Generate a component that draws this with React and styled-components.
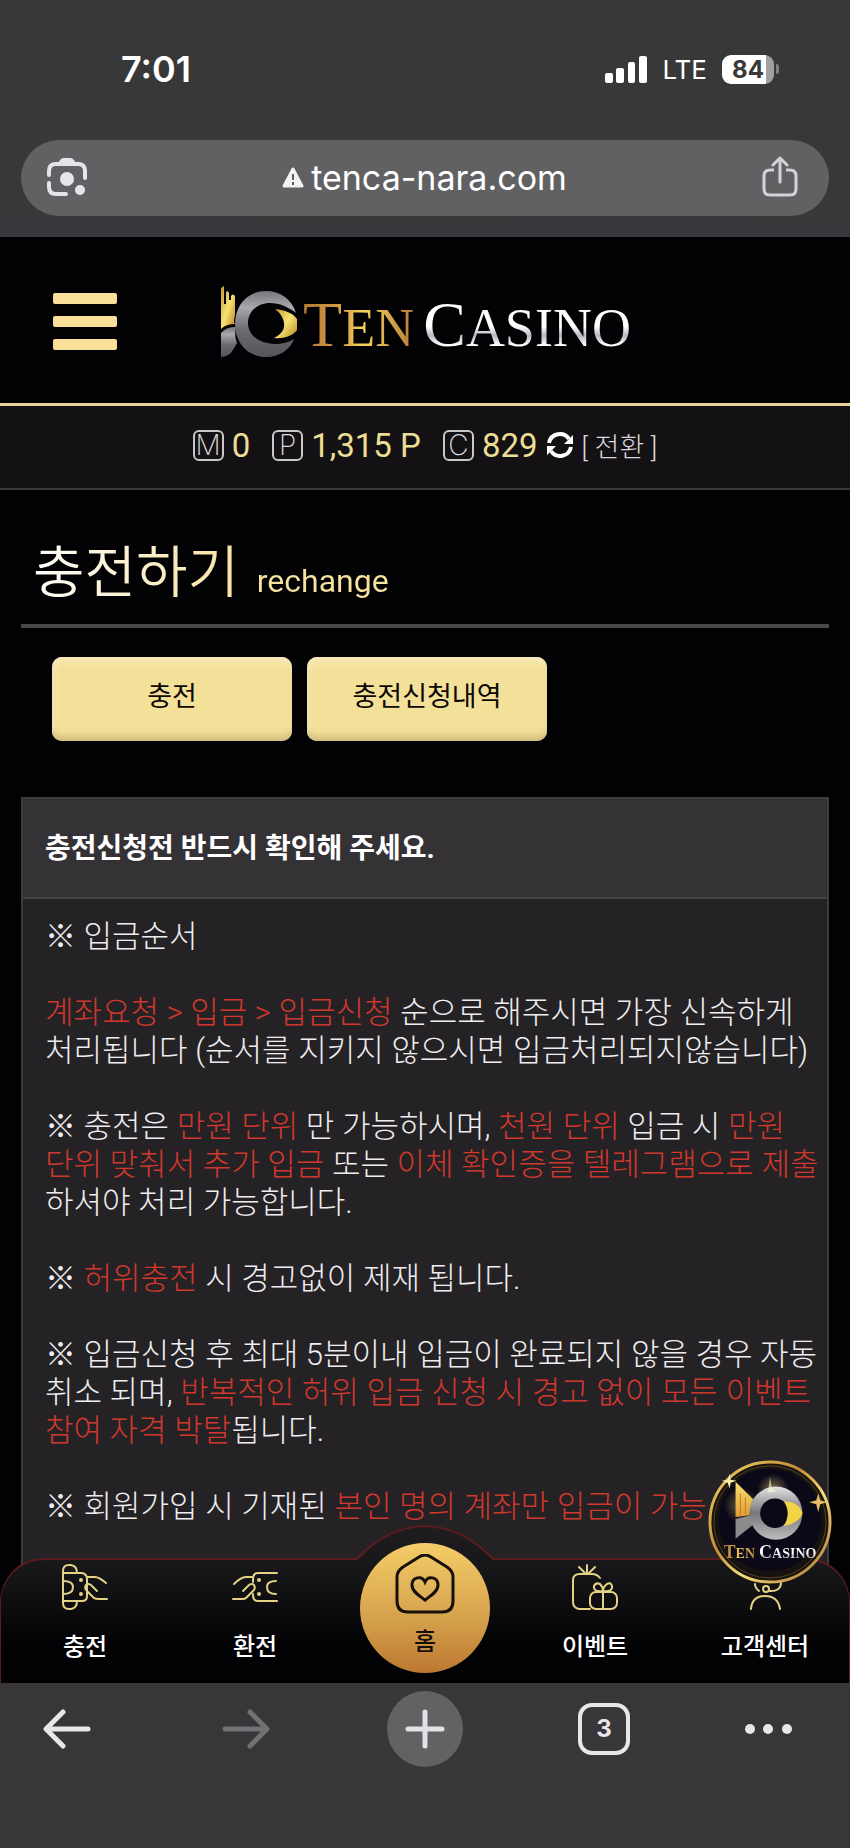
import React from "react";
import styled, { createGlobalStyle } from "styled-components";

const App = () => {
  return (
    <Phone>
      <GlobalStyle />
      <BrowserTop>
        <StatusBar>
          <Time>7:01</Time>
          <StatusRight>
            <SignalIcon />
            <Network>LTE</Network>
            <Battery>
              <Level>84</Level>
              <Nub />
            </Battery>
          </StatusRight>
        </StatusBar>
        <AddressBar>
          <IconButton aria-label="Lens">
            <LensIcon />
          </IconButton>
          <Address href="#address">
            <WarningIcon />
            tenca-nara.com
          </Address>
          <IconButton aria-label="Share">
            <ShareIcon />
          </IconButton>
        </AddressBar>
      </BrowserTop>

      <Site>
        <SiteHeader>
          <MenuButton aria-label="Menu">
            <MenuBar />
            <MenuBar />
            <MenuBar />
          </MenuButton>
          <Logo href="#home">
            <LogoMark id="head" width="78" height="72" />
            <LogoText>
              <GoldWord>
                <Initial>T</Initial>EN
              </GoldWord>
              <SilverWord>
                <Initial>C</Initial>ASINO
              </SilverWord>
            </LogoText>
          </Logo>
        </SiteHeader>

        <Wallet>
          <Balance>
            <Coin>M</Coin>0
          </Balance>
          <Balance>
            <Coin>P</Coin>1,315 P
          </Balance>
          <Balance>
            <Coin>C</Coin>829
            <Convert>
              <RefreshIcon />[ 전환 ]
            </Convert>
          </Balance>
        </Wallet>

        <Content>
          <Title>
            충전하기 <small>rechange</small>
          </Title>
          <Tabs>
            <TabButton>충전</TabButton>
            <TabButton>충전신청내역</TabButton>
          </Tabs>
          <Notice>
            <NoticeTitle>충전신청전 반드시 확인해 주세요.</NoticeTitle>
            <NoticeBody>
              <p>※ 입금순서</p>
              <p>
                <Red>계좌요청 &gt; 입금 &gt; 입금신청</Red> 순으로 해주시면 가장 신속하게
                <br />
                처리됩니다 (순서를 지키지 않으시면 입금처리되지않습니다)
              </p>
              <p>
                ※ 충전은 <Red>만원 단위</Red> 만 가능하시며, <Red>천원 단위</Red> 입금 시{" "}
                <Red>
                  만원
                  <br />
                  단위 맞춰서 추가 입금
                </Red>{" "}
                또는 <Red>이체 확인증을 텔레그램으로 제출</Red>
                <br />
                하셔야 처리 가능합니다.
              </p>
              <p>
                ※ <Red>허위충전</Red> 시 경고없이 제재 됩니다.
              </p>
              <p>
                ※ 입금신청 후 최대 5분이내 입금이 완료되지 않을 경우 자동
                <br />
                취소 되며,{" "}
                <Red>
                  반복적인 허위 입금 신청 시 경고 없이 모든 이벤트
                  <br />
                  참여 자격 박탈
                </Red>
                됩니다.
              </p>
              <p>
                ※ 회원가입 시 기재된 <Red>본인 명의 계좌만 입금이 가능</Red>
              </p>
            </NoticeBody>
          </Notice>
        </Content>

        <BottomNav>
          <NavShape />
          <NavItem href="#deposit">
            <DepositIcon />
            충전
          </NavItem>
          <NavItem href="#withdraw">
            <WithdrawIcon />
            환전
          </NavItem>
          <HomeItem href="#home">
            <HomeIcon />홈
          </HomeItem>
          <NavItem href="#event">
            <EventIcon />
            이벤트
          </NavItem>
          <NavItem href="#help">
            <HelpIcon />
            고객센터
          </NavItem>
        </BottomNav>

        <Badge href="#ten" aria-label="Ten Casino">
          <BadgeArt />
          <BadgeText>
            <GoldWord>
              <BadgeInitial>T</BadgeInitial>EN
            </GoldWord>
            <SilverWord>
              <BadgeInitial>C</BadgeInitial>ASINO
            </SilverWord>
          </BadgeText>
        </Badge>
      </Site>

      <Toolbar>
        <ToolButton aria-label="Back">
          <ArrowIcon color="#e9e6ea" />
        </ToolButton>
        <ToolButton aria-label="Forward" disabled>
          <ArrowIcon color="#737074" flip />
        </ToolButton>
        <ToolButton aria-label="New tab" $round>
          <PlusIcon />
        </ToolButton>
        <ToolButton aria-label="Tabs">
          <TabCount>3</TabCount>
        </ToolButton>
        <ToolButton aria-label="More">
          <DotsIcon />
        </ToolButton>
      </Toolbar>
    </Phone>
  );
};

export default App;

const SignalIcon = () => (
  <svg width="42" height="27" viewBox="0 0 42 27" fill="#fff">
    <rect x="0" y="17" width="8" height="10" rx="2" />
    <rect x="11" y="12" width="8" height="15" rx="2" />
    <rect x="23" y="6" width="7" height="21" rx="2" />
    <rect x="34" y="0" width="8" height="27" rx="2" />
  </svg>
);

const LensIcon = () => (
  <svg width="40" height="40" viewBox="0 0 40 40" fill="none" stroke="#e6e4e8" strokeWidth="4">
    <path d="M2 18V14Q2 7 9 7H31Q38 7 38 14V21M2 26V30Q2 37 9 37H19" strokeLinecap="round" />
    <path d="M10 7L14 2Q15 1 17 1H23Q25 1 26 2L30 7Z" fill="#e6e4e8" stroke="none" />
    <circle cx="20" cy="22" r="7" fill="#e6e4e8" stroke="none" />
    <circle cx="33" cy="33" r="5" fill="#e6e4e8" stroke="none" />
  </svg>
);

const WarningIcon = () => (
  <svg width="22" height="21" viewBox="0 0 22 21">
    <path d="M11 2L20 19H2Z" fill="#f3f2f4" stroke="#f3f2f4" strokeWidth="3" strokeLinejoin="round" />
    <path d="M11 7V13M11 15V18" stroke="#5f5f62" strokeWidth="2" />
  </svg>
);

const ShareIcon = () => (
  <svg width="36" height="42" viewBox="0 0 36 42" fill="none" stroke="#d4d2d6" strokeWidth="3">
    <path d="M12 14H8Q2 14 2 20V33Q2 39 8 39H28Q34 39 34 33V20Q34 14 28 14H24" />
    <path d="M18 26V3M11 9L18 2L25 9" strokeLinecap="round" strokeLinejoin="round" />
  </svg>
);

const LogoMark = ({ id, ...rest }) => (
  <svg viewBox="0 0 78 72" {...rest}>
    <defs>
      <linearGradient id={`${id}-silver`} x1="0" y1="0" x2="0" y2="1">
        <stop offset="0" stopColor="#77757a" />
        <stop offset="0.25" stopColor="#a9a8ad" />
        <stop offset="0.6" stopColor="#6b696f" />
        <stop offset="1" stopColor="#57555b" />
      </linearGradient>
      <linearGradient id={`${id}-gold`} x1="0" y1="0" x2="1" y2="1">
        <stop offset="0" stopColor="#c3962f" />
        <stop offset="0.5" stopColor="#f8e372" />
        <stop offset="1" stopColor="#b98526" />
      </linearGradient>
    </defs>
    <path
      d="M0 2L3 0V18H5V6Q7 4 8 7V14H10V10Q12 7 14 10V29Q12 36 14 38Q5 38 0 43Z"
      fill={`url(#${id}-gold)`}
    />
    <path d="M0 47Q6 40 15 41Q13 50 16 57Q13 62 10 67Q5 71 0 71Z" fill={`url(#${id}-silver)`} />
    <path
      d="M75 27C71 13 59 5 45 5C27 5 14 19 14 38C14 57 27 71 45 71C58 71 69 64 73 53C65 58 55 59 46 57C35 55 27 47 27 37C27 26 36 17 49 17C59 17 67 21 75 27Z"
      fill={`url(#${id}-silver)`}
    />
    <path
      d="M54 23C64 24 72 27 76 33V44C72 50 62 53 53 52C61 48 64 43 63 37C62 31 59 27 54 23Z"
      fill={`url(#${id}-gold)`}
    />
  </svg>
);

const RefreshIcon = () => (
  <svg width="28" height="28" viewBox="0 0 28 28">
    <path d="M3 12A11 11 0 0 1 23 8M25 16A11 11 0 0 1 5 20" fill="none" stroke="#fff" strokeWidth="4" />
    <path d="M27 4V13H18ZM1 24V15H10Z" fill="#fff" />
  </svg>
);

// only the side pieces stretch, the arch over the home button keeps its size
const NavShape = () => (
  <Plate>
    <PlateSide $left />
    <svg width="144" height="158" viewBox="0 0 144 158">
      <defs>
        <linearGradient id="plate" x1="0" y1="0" x2="0" y2="1">
          <stop offset="0" stopColor="#1f1d20" />
          <stop offset="0.3" stopColor="#161517" />
          <stop offset="0.75" stopColor="#020104" />
        </linearGradient>
      </defs>
      <path d="M0 34H4Q34 2 72 1Q110 2 140 34H144V158H0Z" fill="url(#plate)" />
      <path d="M0 34H4Q34 2 72 1Q110 2 140 34H144" fill="none" stroke="#5c1c1e" strokeWidth="2" />
    </svg>
    <PlateSide />
  </Plate>
);

const NavSvg = ({ children }) => (
  <svg
    width="46"
    height="46"
    viewBox="0 0 46 46"
    fill="none"
    stroke="#e3d184"
    strokeWidth="2"
    strokeLinecap="round"
    strokeLinejoin="round"
  >
    {children}
  </svg>
);

const DepositIcon = () => (
  <NavSvg>
    <path d="M1 9H20Q25 10 25 15V32Q25 37 20 37H1Z" />
    <path d="M1 9V7Q1 1 7 1H9Q15 2 15 9M1 37V39Q1 45 7 45H9Q15 44 15 37" />
    <path d="M1 17Q11 17 11 23Q11 30 1 30" />
    <path d="M25 13H33Q37 13 44 19M35 27L29 21Q26 19 24 21Q22 24 25 27L32 34Q34 35 37 35H45" />
    <circle cx="19" cy="16" r="1" fill="#e3d184" />
    <circle cx="19" cy="30" r="1" fill="#e3d184" />
  </NavSvg>
);

const WithdrawIcon = () => (
  <NavSvg>
    <path d="M45 9H26Q21 9 21 15V18M45 37H26Q21 37 21 31V30" />
    <path d="M44 17Q35 17 35 23Q35 30 44 30" />
    <path d="M21 13H14Q9 13 2 20M11 27L17 21Q20 19 22 21Q24 24 21 27L14 34Q13 35 10 35H1" />
    <circle cx="27" cy="16" r="1" fill="#e3d184" />
    <circle cx="27" cy="30" r="1" fill="#e3d184" />
  </NavSvg>
);

const HomeIcon = () => (
  <svg width="60" height="60" viewBox="0 0 60 60" fill="none" stroke="#17100a" strokeWidth="3">
    <path d="M24 3Q30 -1 36 3L52 13Q58 17 58 23V47Q58 58 47 58H13Q2 58 2 47V23Q2 17 8 13Z" />
    <path d="M30 28C27 21 17 23 17 31C17 38 25 42 30 46C35 42 43 38 43 31C43 23 33 21 30 28Z" />
  </svg>
);

const EventIcon = () => (
  <NavSvg>
    <path d="M18 45H7Q1 44 1 38V16Q1 10 8 10H20Q25 10 28 14" />
    <path d="M15 1V9M7 3L13 9M23 3L17 9" />
    <rect x="18" y="28" width="27" height="17" rx="6" />
    <path d="M31 27V45M31 27Q21 28 22 22Q24 18 28 20Q31 23 31 27Q31 23 35 20Q39 18 40 22Q41 28 31 27" />
  </NavSvg>
);

const HelpIcon = () => (
  <NavSvg>
    <path d="M9 14Q9 2 23 2Q37 2 37 14M13 20Q13 24 17 27M39 18Q39 28 27 27" />
    <circle cx="24" cy="25" r="3" />
    <path d="M9 45Q10 32 23 32Q36 32 38 45" />
  </NavSvg>
);

const BadgeArt = () => (
  <svg width="124" height="124" viewBox="0 0 126 126">
    <defs>
      <linearGradient id="ring" x1="0" y1="0" x2="1" y2="1">
        <stop offset="0" stopColor="#f3d869" />
        <stop offset="0.4" stopColor="#c18a35" />
        <stop offset="0.6" stopColor="#f5df78" />
        <stop offset="1" stopColor="#a5672e" />
      </linearGradient>
      <radialGradient id="glow">
        <stop offset="0" stopColor="#fffbe0" />
        <stop offset="0.2" stopColor="#e9cf75" stopOpacity="0.7" />
        <stop offset="1" stopColor="#e9cf75" stopOpacity="0" />
      </radialGradient>
      <linearGradient id="steel" x1="0" y1="0" x2="0" y2="1">
        <stop offset="0" stopColor="#e2e2e4" />
        <stop offset="0.5" stopColor="#77777a" />
        <stop offset="1" stopColor="#bdbdc0" />
      </linearGradient>
      <linearGradient id="fin" x1="0" y1="0" x2="0" y2="1">
        <stop offset="0" stopColor="#f5e36e" />
        <stop offset="1" stopColor="#e09a31" />
      </linearGradient>
    </defs>
    <circle cx="63" cy="63" r="61" fill="#17130f" stroke="url(#ring)" strokeWidth="3" />
    <circle cx="63" cy="63" r="57" fill="#15120f" stroke="#5a431f" />
    <circle cx="63" cy="61" r="52" fill="#0b0917" />
    <circle cx="34" cy="46" r="18" fill="url(#glow)" opacity="0.5" />
    <circle cx="66" cy="30" r="16" fill="url(#glow)" opacity="0.6" />
    <path d="M28 22L46 40Q42 48 44 56L28 58Z" fill="url(#fin)" />
    <path d="M33 34V56M38 38V55" stroke="#c27a26" />
    <path d="M28 60L45 56L48 64L28 80Z" fill="#8b8b8c" />
    <ellipse cx="69" cy="54" rx="27" ry="27" fill="url(#steel)" />
    <circle cx="68" cy="54" r="15" fill="#0b0917" />
    <path d="M77 42Q93 43 96 54Q93 64 77 67Q85 54 77 42Z" fill="#f2d447" />
    <path d="M22 14L23 20L29 21L23 23L22 29L20 23L14 21L20 20Z" fill="#f8edaa" />
    <path d="M112 34L114 41L121 43L114 45L112 53L110 45L103 43L110 41Z" fill="#e8bd62" />
    <path d="M63 17L65 29L70 32L61 33Z" fill="#fff8d2" opacity="0.6" />
  </svg>
);

const ArrowIcon = ({ color, flip }) => (
  <svg width="48" height="40" viewBox="0 0 48 40" fill="none" stroke={color} strokeWidth="5">
    <path
      d={flip ? "M3 20H44M28 3L45 20L28 37" : "M45 20H4M20 3L3 20L20 37"}
      strokeLinecap="round"
      strokeLinejoin="round"
    />
  </svg>
);

const PlusIcon = () => (
  <svg width="40" height="40" viewBox="0 0 40 40" stroke="#e4e2e5" strokeWidth="5" strokeLinecap="round">
    <path d="M20 3V37M3 20H37" />
  </svg>
);

const DotsIcon = () => (
  <svg width="48" height="12" viewBox="0 0 48 12" fill="#e9e6ea">
    <circle cx="5" cy="6" r="5" />
    <circle cx="23" cy="6" r="5" />
    <circle cx="42" cy="6" r="5" />
  </svg>
);

const GlobalStyle = createGlobalStyle`
  * {
    box-sizing: border-box;
  }

  body {
    margin: 0;
    background: #39363a;
    font-family: Roboto, "Noto Sans CJK KR", sans-serif;
  }

  button {
    border: none;
    padding: 0;
    background: none;
    font-family: inherit;
  }

  a {
    color: inherit;
    text-decoration: none;
  }

  svg {
    display: block;
    flex-shrink: 0;
  }
`;

const Phone = styled.div`
  height: 100vh;
  display: flex;
  flex-direction: column;
`;

const BrowserTop = styled.header`
  background: linear-gradient(#383838 70%, #39373b);
  color: #fff;
  font-family: Inter, sans-serif;
  padding: 0 21px 21px;
`;

const StatusBar = styled.div`
  height: 140px;
  padding: 0 50px 2px 100px;
  display: flex;
  align-items: center;
  justify-content: space-between;
`;

const Time = styled.span`
  font-size: 36px;
  font-weight: 600;
`;

const StatusRight = styled.div`
  display: flex;
  align-items: center;
  gap: 15px;
`;

const Network = styled.span`
  font-size: 26px;
`;

const Battery = styled.div`
  display: flex;
  align-items: center;
  gap: 2px;
`;

const Level = styled.span`
  width: 52px;
  height: 29px;
  border-radius: 9px;
  background: linear-gradient(90deg, #fff 84%, #a09fa1 84%);
  color: #383838;
  font-size: 24px;
  font-weight: 700;
  line-height: 29px;
  text-align: center;
`;

const Nub = styled.span`
  width: 3px;
  height: 10px;
  border-radius: 0 3px 3px 0;
  background: #7f7f80;
`;

const AddressBar = styled.div`
  height: 76px;
  padding: 0 31px 2px 26px;
  border-radius: 38px;
  background: #616164;
  display: flex;
  align-items: center;
  justify-content: space-between;
`;

const IconButton = styled.button`
  display: flex;
`;

const Address = styled.a`
  display: flex;
  align-items: center;
  gap: 7px;
  font-size: 34px;
`;

const Site = styled.main`
  flex: 1;
  min-height: 0;
  position: relative;
  overflow: hidden;
  display: flex;
  flex-direction: column;
  background: #020104;
`;

const SiteHeader = styled.div`
  height: 169px;
  flex-shrink: 0;
  padding: 3px 51px 0 53px;
  border-bottom: 3px solid #e6d29a;
  display: grid;
  grid-template-columns: 1fr auto 1fr;
  align-items: center;
`;

const MenuButton = styled.button`
  width: 64px;
  display: flex;
  flex-direction: column;
  gap: 12px;
`;

const MenuBar = styled.span`
  width: 100%;
  height: 11px;
  border-radius: 2px;
  background: #f9df97;
`;

const Logo = styled.a`
  display: flex;
  align-items: center;
  gap: 4px;
`;

const LogoText = styled.span`
  padding-top: 10px;
  display: flex;
  gap: 9px;
  font-family: "Liberation Serif", serif;
  font-size: 54px;
  line-height: 72px;
`;

const Initial = styled.span`
  font-size: 64px;
`;

const GoldWord = styled.span`
  color: transparent;
  background: linear-gradient(90deg, #b07a34, #d99f45 35%, #f5d65c 55%, #b77b38);
  background-clip: text;
`;

const SilverWord = styled.span`
  color: transparent;
  background: linear-gradient(#fff 50%, #b9b8bf 62%, #fff 75%);
  background-clip: text;
`;

const Wallet = styled.div`
  height: 84px;
  flex-shrink: 0;
  padding-bottom: 4px;
  border-bottom: 2px solid #3a373a;
  background: #141114;
  display: flex;
  align-items: center;
  justify-content: center;
  gap: 22px;
`;

const Balance = styled.div`
  display: flex;
  align-items: center;
  gap: 8px;
  color: #ecdf93;
  font-size: 33px;
  font-weight: 400;
`;

const Coin = styled.span`
  width: 31px;
  height: 31px;
  border: 2px solid #c9c7ca;
  border-radius: 6px;
  color: #dddcde;
  font-family: Inter, sans-serif;
  font-size: 28px;
  font-weight: 200;
  line-height: 27px;
  display: flex;
  justify-content: center;
`;

const Convert = styled.button`
  display: flex;
  align-items: center;
  gap: 8px;
  color: #d9d7da;
  font-size: 27px;
  font-weight: 300;
`;

const Content = styled.div`
  flex: 1;
  padding: 0 21px;
  display: flex;
  flex-direction: column;
`;

const Title = styled.h1`
  margin: 0;
  height: 138px;
  padding: 0 12px;
  border-bottom: 4px solid #4a484b;
  color: transparent;
  background: linear-gradient(90deg, #fff, #f7e3a0 220px);
  background-clip: text;
  font-size: 56px;
  font-weight: 350;
  line-height: 166px;

  small {
    margin-left: 4px;
    font-size: 32px;
    font-weight: 400;
  }
`;

const Tabs = styled.div`
  padding: 29px 31px 56px;
  display: flex;
  gap: 15px;
`;

const TabButton = styled.button`
  width: 240px;
  height: 84px;
  padding-bottom: 10px;
  border-radius: 10px;
  background: #f4e199;
  box-shadow:
    inset 0 -8px 8px -4px #c9b67a,
    inset 0 6px 8px -2px #f7ebc0,
    inset 4px 0 6px -3px #fbf0c6;
  color: #0c0905;
  font-size: 27px;
  font-weight: 400;
`;

const Notice = styled.section`
  flex: 1;
  border: 2px solid #3d3b3e;
  background: #242225;
`;

const NoticeTitle = styled.h2`
  margin: 0;
  padding: 2px 22px 0;
  border-bottom: 2px solid #454246;
  background: #353236;
  color: #fff;
  font-size: 28px;
  font-weight: 700;
  line-height: 96px;
`;

const NoticeBody = styled.div`
  padding: 19px 0 0 22px;
  color: #efedf0;
  font-size: 31px;
  font-weight: 300;
  line-height: 38px;
  white-space: nowrap;

  p {
    margin: 0 0 38px;
  }
`;

const Red = styled.span`
  color: #d0382d;
`;

const BottomNav = styled.nav`
  position: absolute;
  left: 0;
  right: 0;
  bottom: 0;
  height: 158px;
  display: grid;
  grid-template-columns: repeat(5, 1fr);
`;

const Plate = styled.div`
  position: absolute;
  inset: 0;
  display: flex;
  align-items: flex-end;
`;

const PlateSide = styled.div`
  flex: 1;
  height: 125px;
  border: solid #5c1c1e;
  border-width: ${({ $left }) => ($left ? "2px 0 0 1px" : "2px 1px 0 0")};
  border-radius: ${({ $left }) => ($left ? "44px 0 0 0" : "0 44px 0 0")};
  background: linear-gradient(#19181b, #020104 70%);
`;

const NavItem = styled.a`
  position: relative;
  padding-top: 39px;
  display: flex;
  flex-direction: column;
  align-items: center;
  gap: 19px;
  color: #fff;
  font-size: 24px;
  font-weight: 500;
  line-height: 36px;
`;

const HomeItem = styled(NavItem)`
  width: 130px;
  height: 130px;
  margin-top: 18px;
  padding-top: 11px;
  justify-self: center;
  gap: 10px;
  border-radius: 50%;
  background: linear-gradient(#f5cd69, #d3a04b 60%, #bd7730);
  color: #17100a;
`;

const Badge = styled.a`
  position: absolute;
  right: 18px;
  bottom: 99px;
`;

const BadgeText = styled.span`
  position: absolute;
  left: 0;
  right: 0;
  bottom: 18px;
  display: flex;
  justify-content: center;
  gap: 4px;
  font-family: "Liberation Serif", serif;
  font-size: 14px;
  font-weight: 700;
  line-height: 24px;
`;

const BadgeInitial = styled.span`
  font-size: 18px;
`;

const Toolbar = styled.footer`
  height: 165px;
  padding: 8px 29px;
  background: #39363a;
  display: flex;
  align-items: flex-start;
  justify-content: space-between;
`;

const ToolButton = styled.button`
  width: 76px;
  height: 76px;
  border-radius: 50%;
  background: ${({ $round }) => ($round ? "#626164" : "none")};
  display: flex;
  align-items: center;
  justify-content: center;

  &:last-child {
    justify-content: flex-start;
  }
`;

const TabCount = styled.span`
  width: 52px;
  height: 52px;
  border: 4px solid #e9e6ea;
  border-radius: 14px;
  color: #e9e6ea;
  font-family: Inter, sans-serif;
  font-size: 24px;
  font-weight: 700;
  line-height: 44px;
`;
